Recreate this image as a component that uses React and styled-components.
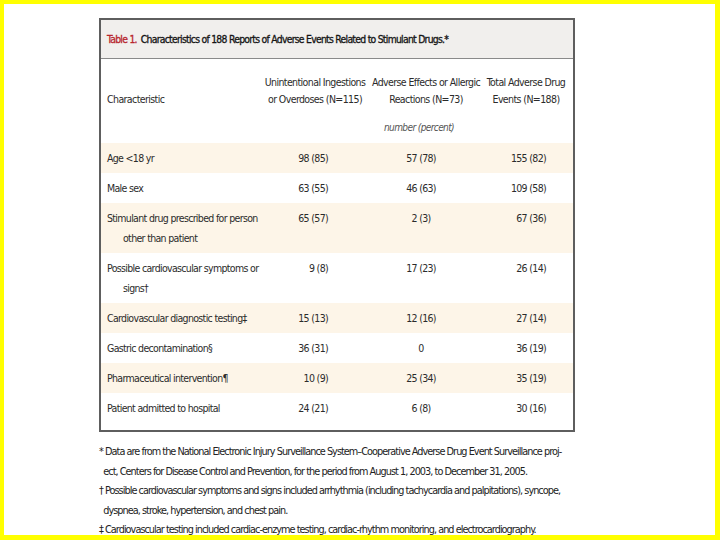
import styled, { createGlobalStyle } from "styled-components";

const GlobalStyle = createGlobalStyle`
  html, body {
    margin: 0;
    padding: 0;
    background: #ffffff;
  }
`;

const Page = styled.div`
  box-sizing: border-box;
  width: 720px;
  height: 540px;
  overflow: hidden;
  border-style: solid;
  border-color: #ffff00;
  border-width: 4px 5px 5px 4px;
  background: #ffffff;
  padding: 14px 0 0 95px;
  font-family: "DejaVu Sans Condensed", "Liberation Sans", sans-serif;
  color: #2b2b2b;
`;

const Card = styled.div`
  box-sizing: border-box;
  width: 476px;
  border: 2px solid #5e5e5e;
  padding-bottom: 7px;
`;

const TitleBar = styled.div`
  height: 38px;
  background: #f1efed;
  border-bottom: 1px solid #8a8a8a;
  display: flex;
  align-items: center;
  padding-left: 6px;
  font-size: 10.3px;
  letter-spacing: -0.72px;
  color: #151515;
  -webkit-text-stroke: 0.3px currentColor;
  white-space: nowrap;
`;

const TableNo = styled.span`
  color: #b8262e;
  margin-right: 4px;
`;

const Head = styled.div`
  display: grid;
  grid-template-columns: 161px 106px 116px 84px 5px;
  padding-top: 15px;
  font-size: 10.5px;
  line-height: 17px;
  letter-spacing: -0.6px;
`;

const HeadCell = styled.div`
  text-align: ${(p) => (p.$left ? "left" : "center")};
  padding-left: ${(p) => (p.$left ? "6px" : "0")};
  align-self: end;
  white-space: nowrap;
`;

const Unit = styled.div`
  grid-column: 2 / span 3;
  text-align: center;
  margin: 11px 0 7px 0;
  font-style: italic;
  font-size: 10px;
  color: #555;
  padding-left: 8px;
`;

const Row = styled.div`
  display: grid;
  grid-template-columns: 164px 80px 152px 76px;
  padding: 5px 0;
  line-height: 20px;
  font-size: 10.5px;
  letter-spacing: -0.67px;
  background: ${(p) => (p.$shaded ? "#fdf5e8" : "transparent")};
`;

const Label = styled.div`
  padding-left: 6px;
  white-space: nowrap;
`;

const Wrap = styled.div`
  padding-left: 16px;
`;

const Num = styled.div`
  white-space: nowrap;
  text-align: ${(p) => p.$align};
  padding-right: ${(p) => p.$pad || 0}px;
`;

const Notes = styled.div`
  width: 480px;
  margin-top: 10px;
  font-size: 10.8px;
  line-height: 19.5px;
  letter-spacing: -0.96px;
  color: #222;
`;

const Note = styled.div`
  padding-left: 7px;
  text-indent: -7px;
  white-space: nowrap;
`;

const rows = [
  { label: "Age <18 yr", a: "98 (85)", b: "57 (78)", c: "155 (82)" },
  { label: "Male sex", a: "63 (55)", b: "46 (63)", c: "109 (58)" },
  { label: "Stimulant drug prescribed for person", wrap: "other than patient", a: "65 (57)", b: "2 (3)", c: "67 (36)" },
  { label: "Possible cardiovascular symptoms or", wrap: "signs†", a: "9 (8)", b: "17 (23)", c: "26 (14)" },
  { label: "Cardiovascular diagnostic testing‡", a: "15 (13)", b: "12 (16)", c: "27 (14)" },
  { label: "Gastric decontamination§", a: "36 (31)", b: "0", c: "36 (19)" },
  { label: "Pharmaceutical intervention¶", a: "10 (9)", b: "25 (34)", c: "35 (19)" },
  { label: "Patient admitted to hospital", a: "24 (21)", b: "6 (8)", c: "30 (16)" },
];

export default function App() {
  return (
    <>
      <GlobalStyle />
      <Page>
        <Card>
          <TitleBar>
            <TableNo>Table 1.</TableNo>
            Characteristics of 188 Reports of Adverse Events Related to Stimulant Drugs.*
          </TitleBar>
          <Head>
            <HeadCell $left>Characteristic</HeadCell>
            <HeadCell>Unintentional Ingestions<br />or Overdoses (N=115)</HeadCell>
            <HeadCell>Adverse Effects or Allergic<br />Reactions (N=73)</HeadCell>
            <HeadCell>Total Adverse Drug<br />Events (N=188)</HeadCell>
            <div />
            <Unit>number (percent)</Unit>
          </Head>
          {rows.map((r, i) => (
            <Row key={r.label} $shaded={i % 2 === 0}>
              <Label>
                {r.label}
                {r.wrap && <Wrap>{r.wrap}</Wrap>}
              </Label>
              <Num $align="right" $pad={17}>{r.a}</Num>
              <Num $align="center">{r.b}</Num>
              <Num $align="right" $pad={27}>{r.c}</Num>
            </Row>
          ))}
        </Card>
        <Notes>
          <Note>* Data are from the National Electronic Injury Surveillance System–Cooperative Adverse Drug Event Surveillance proj-</Note>
          <Note>&nbsp; ect, Centers for Disease Control and Prevention, for the period from August 1, 2003, to December 31, 2005.</Note>
          <Note>† Possible cardiovascular symptoms and signs included arrhythmia (including tachycardia and palpitations), syncope,</Note>
          <Note>&nbsp; dyspnea, stroke, hypertension, and chest pain.</Note>
          <Note>‡ Cardiovascular testing included cardiac-enzyme testing, cardiac-rhythm monitoring, and electrocardiography.</Note>
        </Notes>
      </Page>
    </>
  );
}
